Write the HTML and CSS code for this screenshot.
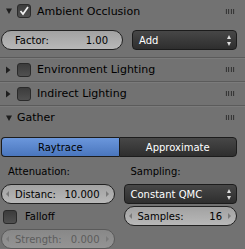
FILE: index.html
```html
<!DOCTYPE html>
<html lang="en">
<head>
    <meta charset="UTF-8">
    <title>Ambient Occlusion</title>
    <link rel="stylesheet" href="styles.css">
</head>
<body>
    <div class="panel">
        <!-- Ambient Occlusion -->
        <div class="header first">
            <svg class="tri" width="8" height="8" viewBox="0 0 8 8"><polygon points="1,1.5 7,1.5 4,7" /></svg>
            <span class="check on">
                <svg width="12" height="12" viewBox="0 0 12 12"><polyline points="2.5,6 5,9 10,2" /></svg>
            </span>
            <span class="title">Ambient Occlusion</span>
            <span class="grip"></span>
        </div>
        <div class="content ao">
            <div class="row">
                <div class="num plain"><span>Factor:</span><span>1.00</span></div>
                <div class="menu"><span>Add</span><span class="updown"></span></div>
            </div>
        </div>

        <!-- Environment Lighting -->
        <div class="header">
            <svg class="tri" width="8" height="8" viewBox="0 0 8 8"><polygon points="1,0.5 5.5,4 1,7.5" /></svg>
            <span class="check"></span>
            <span class="title">Environment Lighting</span>
            <span class="grip"></span>
        </div>

        <!-- Indirect Lighting -->
        <div class="header">
            <svg class="tri" width="8" height="8" viewBox="0 0 8 8"><polygon points="1,0.5 5.5,4 1,7.5" /></svg>
            <span class="check"></span>
            <span class="title">Indirect Lighting</span>
            <span class="grip"></span>
        </div>

        <!-- Gather -->
        <div class="header">
            <svg class="tri" width="8" height="8" viewBox="0 0 8 8"><polygon points="1,1.5 7,1.5 4,7" /></svg>
            <span class="title">Gather</span>
            <span class="grip"></span>
        </div>
        <div class="content gather">
            <div class="tabs">
                <div class="tab active">Raytrace</div>
                <div class="tab">Approximate</div>
            </div>
            <div class="cols">
                <div class="col">
                    <div class="label">Attenuation:</div>
                    <div class="num"><span>Distanc:</span><span>10.000</span></div>
                    <div class="toggle"><span class="check"></span><span>Falloff</span></div>
                    <div class="num disabled"><span>Strength:</span><span>0.000</span></div>
                </div>
                <div class="col">
                    <div class="label">Sampling:</div>
                    <div class="menu"><span>Constant QMC</span><span class="updown"></span></div>
                    <div class="num"><span>Samples:</span><span>16</span></div>
                </div>
            </div>
        </div>
    </div>
</body>
</html>
```

FILE: styles.css
```css
body {
    margin: 0;
    background-color: #727272;
    font-family: "DejaVu Sans", sans-serif;
    font-size: 10px;
    color: #000;
}

.panel {
    width: 245px;
}

/* panel headers */
.header {
    display: flex;
    align-items: center;
    height: 23px;
    border-top: 1px solid #5b5b5b;
    box-shadow: inset 0 1px 0 #7b7b7b;
    padding-left: 5px;
    font-size: 11px;
}

.header.first {
    border-top: none;
    box-shadow: none;
    height: 22px;
}

.tri {
    fill: #1e1e1e;
    margin-right: 4px;
}

.title {
    flex: 1;
}

.check + .title {
    margin-left: 6px;
}

.grip {
    width: 10px;
    height: 5px;
    margin-right: 10px;
    background-image: radial-gradient(circle, #1e1e1e 0.6px, transparent 0.8px);
    background-size: 2.5px 1.67px;
}

/* checkbox */
.check {
    display: inline-flex;
    align-items: center;
    justify-content: center;
    width: 12px;
    height: 12px;
    border: 1px solid #2a2a2a;
    border-radius: 3px;
    background: linear-gradient(#3c3c3c, #505050);
}

.check svg {
    fill: none;
    stroke: #f2f2f2;
    stroke-width: 1.7;
}

/* content areas */
.content {
    padding: 0 8px 0 1px;
}

.content.ao {
    padding-top: 8px;
    padding-bottom: 7px;
}

.row {
    display: flex;
    gap: 9px;
}

.row > * {
    flex: 1;
}

/* number fields */
.num {
    display: flex;
    justify-content: space-between;
    align-items: center;
    height: 18px;
    border: 1px solid #222;
    border-radius: 10px;
    background: linear-gradient(#a2a2a2, #b8b8b8);
    padding: 0 14px 0 13px;
    position: relative;
}

.num:not(.plain)::before,
.num:not(.plain)::after {
    content: "";
    position: absolute;
    top: 6px;
    border-top: 3px solid transparent;
    border-bottom: 3px solid transparent;
}

.num:not(.plain)::before {
    left: 4px;
    border-right: 3px solid #7a7a7a;
}

.num:not(.plain)::after {
    right: 5px;
    border-left: 3px solid #7a7a7a;
}

.num.disabled {
    color: #5c5c5c;
    border-color: #5a5a5a;
    background: linear-gradient(#888, #949494);
}

.num.disabled::before {
    border-right-color: #7a7a7a;
}

.num.disabled::after {
    border-left-color: #7a7a7a;
}

/* menus */
.menu {
    display: flex;
    justify-content: space-between;
    align-items: center;
    height: 18px;
    border: 1px solid #1c1c1c;
    border-radius: 4px;
    background: linear-gradient(#474747, #2e2e2e);
    color: #fff;
    padding: 0 4px 0 6px;
}

.updown {
    width: 5px;
    height: 11px;
    position: relative;
}

.updown::before,
.updown::after {
    content: "";
    position: absolute;
    left: 0;
    border-left: 2.5px solid transparent;
    border-right: 2.5px solid transparent;
}

.updown::before {
    top: 0;
    border-bottom: 4px solid #dedede;
}

.updown::after {
    bottom: 0;
    border-top: 4px solid #dedede;
}

/* gather */
.content.gather {
    padding-top: 8px;
}

.tabs {
    display: flex;
    height: 20px;
}

.tab {
    flex: 1;
    display: flex;
    align-items: center;
    justify-content: center;
    border: 1px solid #1c1c1c;
    background: linear-gradient(#474747, #2e2e2e);
    color: #fff;
    border-radius: 0 4px 4px 0;
}

.tab.active {
    background: linear-gradient(#6b97dc, #4a76bd);
    color: #000;
    border-radius: 4px 0 0 4px;
    border-right: none;
}

.cols {
    display: flex;
    gap: 9px;
}

.col {
    flex: 1;
    display: flex;
    flex-direction: column;
    gap: 2px;
}

.label {
    margin: 9px 0 4px 7px;
    height: 12px;
}

.toggle {
    display: flex;
    align-items: center;
    gap: 8px;
    height: 21px;
    padding-left: 2px;
}
```
